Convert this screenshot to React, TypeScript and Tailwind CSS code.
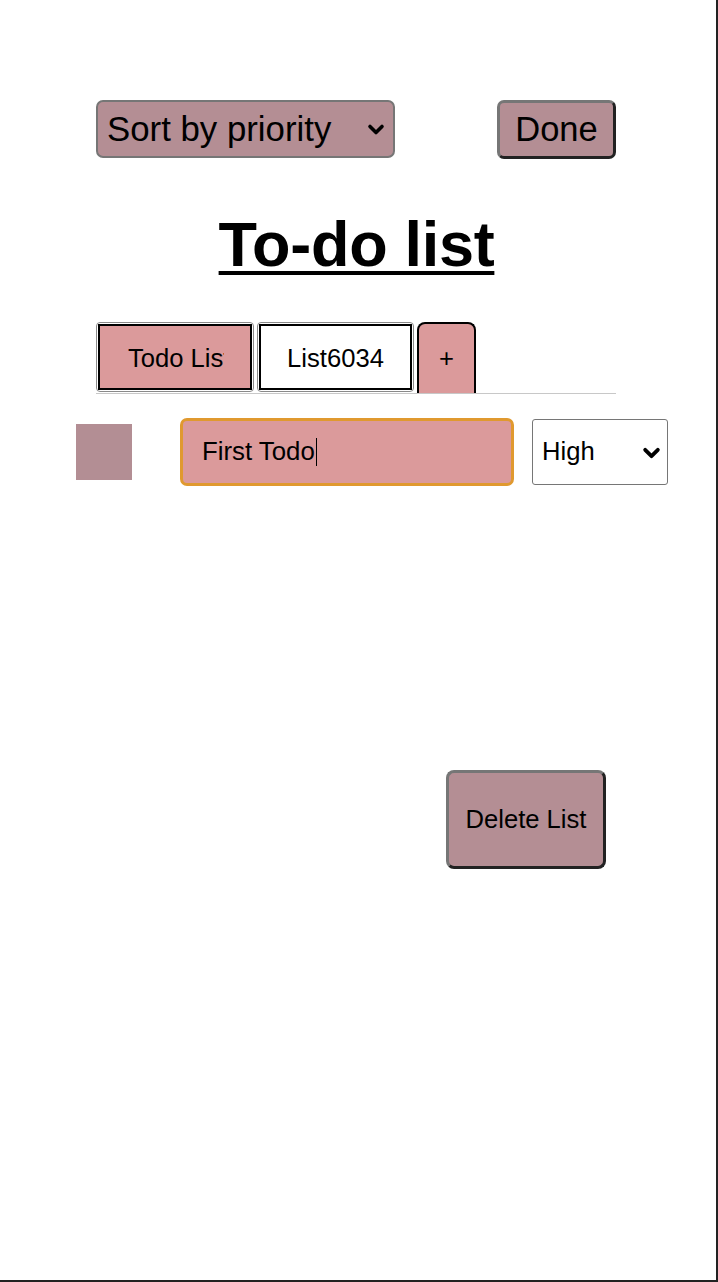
import React from "react";

const Chevron = ({ className }: { className?: string }) => (
  <svg viewBox="0 0 18 12" className={className} fill="none" stroke="black" strokeWidth="3.6" strokeLinecap="round" strokeLinejoin="round">
    <path d="M3 3 L9 9 L15 3" />
  </svg>
);

export default function App() {
  return (
    <div
      className="w-[718px] h-[1282px] bg-white border-r-2 border-b-2 border-[#222222] text-black overflow-hidden"
      style={{ fontFamily: '"Liberation Sans", Arial, sans-serif' }}
    >
      <div className="ml-[96px] w-[520px] pt-[100px]">
        <div className="flex justify-between items-start">
          <div className="relative w-[299px] h-[58px] bg-[#b48e94] border-2 border-[#767676] rounded-[7px] flex items-center pl-[9px]">
            <span className="text-[34.8px] leading-none">Sort by priority</span>
            <Chevron className="absolute right-[8px] top-[21px] w-[18px] h-[13px]" />
          </div>
          <div className="w-[119px] h-[59px] bg-[#b48e94] border-[3px] border-t-[#767676] border-l-[#767676] border-r-[#222222] border-b-[#222222] rounded-[7px] flex items-center justify-center">
            <span className="text-[34.5px] leading-none">Done</span>
          </div>
        </div>

        <div className="flex justify-center mt-[50px]">
          <h1 className="text-[63px] font-bold underline decoration-[4px] underline-offset-[5px] leading-[70px] tracking-[-0.3px] ml-[1px]">
            To-do list
          </h1>
        </div>

        <div className="mt-[43px] flex items-end h-[72px] border-b border-[#c8c8c8] w-[520px]">
          <div className="w-[158px] h-[70px] border border-[#8a8a8a] rounded-[4px] p-px bg-white mb-[1px]">
            <div className="h-full border-2 border-black bg-[#db9a9b] flex items-center justify-center pt-[3px]">
              <span className="w-[98px] overflow-hidden whitespace-nowrap text-[25.6px] leading-none pl-[2px]">Todo List</span>
            </div>
          </div>
          <div className="ml-[3px] w-[157px] h-[70px] border border-[#8a8a8a] rounded-[4px] p-px bg-white mb-[1px]">
            <div className="h-full border-2 border-black bg-white flex items-center justify-center pt-[3px]">
              <span className="w-[100px] text-center whitespace-nowrap text-[25.6px] leading-none">List6034</span>
            </div>
          </div>
          <div className="ml-[3px] w-[59px] h-[71px] border-2 border-b-0 border-black rounded-t-[8px] bg-[#db9a9b] flex items-center justify-center pt-[1px]">
            <span className="text-[25.6px] leading-none">+</span>
          </div>
        </div>
      </div>

      <div className="ml-[76px] mt-[24px] flex items-center">
        <div className="w-[56px] h-[56px] bg-[#b38e94]" />
        <div className="ml-[48px] w-[334px] h-[68px] bg-[#db9a9b] border-[3px] border-[#e0992f] rounded-[7px] flex items-center pl-[19px]">
          <span className="text-[25.8px] leading-none">First Todo</span>
          <span className="w-px h-[28px] bg-black ml-[1px]" />
        </div>
        <div className="relative ml-[18px] w-[136px] h-[66px] bg-white border border-[#767676] rounded-[3px] flex items-center pl-[9px]">
          <span className="text-[25.6px] leading-none">High</span>
          <Chevron className="absolute right-[6px] top-[26px] w-[19px] h-[14px]" />
        </div>
      </div>

      <div className="ml-[446px] mt-[284px] w-[160px] h-[99px] bg-[#b48e94] border-[3px] border-t-[#767676] border-l-[#767676] border-r-[#222222] border-b-[#222222] rounded-[8px] flex items-center justify-center">
        <span className="text-[25.6px] leading-none">Delete List</span>
      </div>
    </div>
  );
}
